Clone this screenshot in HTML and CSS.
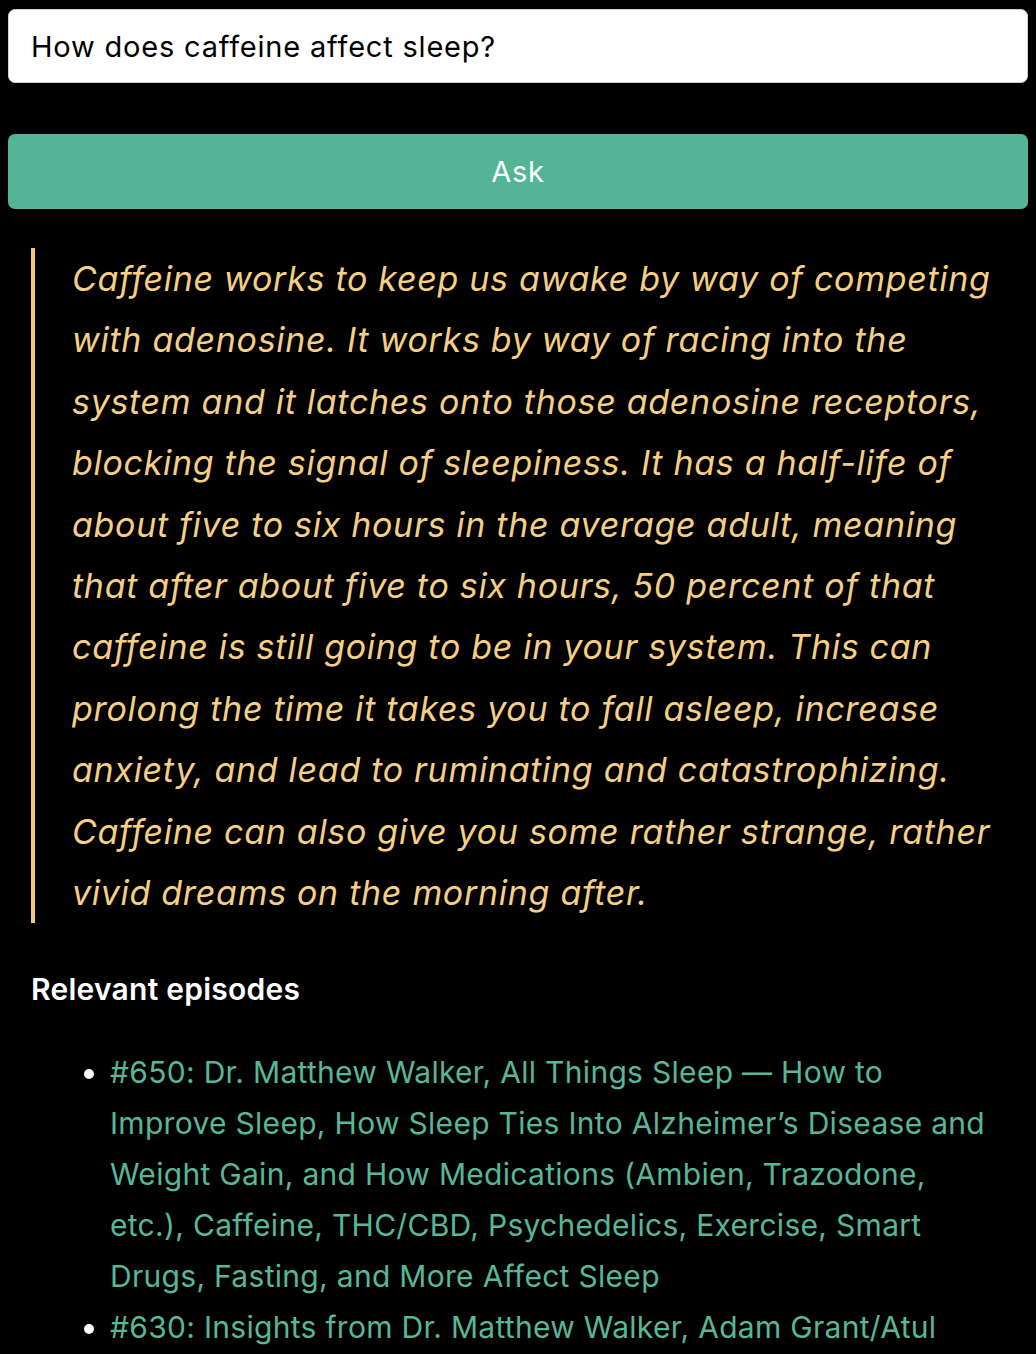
FILE: index.html
```html
<!DOCTYPE html>
<html lang="en">
<head>
<meta charset="utf-8">
<title>Ask</title>
<link rel="stylesheet" href="styles.css">
</head>
<body>
<main class="page">
  <input class="question" type="text" value="How does caffeine affect sleep?">
  <button class="ask">Ask</button>
  <blockquote class="answer">Caffeine works to keep us awake by way of competing with adenosine. It works by way of racing into the system and it latches onto those adenosine receptors, blocking the signal of sleepiness. It has a half-life of about five to six hours in the average adult, meaning that after about five to six hours, 50 percent of that caffeine is still going to be in your system. This can prolong the time it takes you to fall asleep, increase anxiety, and lead to ruminating and catastrophizing. Caffeine can also give you some rather strange, rather vivid dreams on the morning after.</blockquote>
  <h3 class="episodes-title">Relevant episodes</h3>
  <ul class="episodes">
    <li><a href="#">#650: Dr. Matthew Walker, All Things Sleep — How to Improve Sleep, How Sleep Ties Into Alzheimer’s Disease and Weight Gain, and How Medications (Ambien, Trazodone, etc.), Caffeine, THC/CBD, Psychedelics, Exercise, Smart Drugs, Fasting, and More Affect Sleep</a></li>
    <li><a href="#">#630: Insights from Dr. Matthew Walker, Adam Grant/Atul Gawande, and More</a></li>
  </ul>
</main>
</body>
</html>
```

FILE: styles.css
```css
html, body {
  background: #000;
}
body {
  margin: 8px;
  font-family: Inter, "Noto Sans", "Liberation Sans", sans-serif;
  color: #fff;
}
.page {
  display: flex;
  flex-direction: column;
}
.question {
  box-sizing: border-box;
  width: 100%;
  height: 74px;
  margin: 1px 0 0;
  padding: 0 22px;
  border: 1px solid #cfcfcf;
  border-radius: 7px;
  background: #fff;
  color: #000;
  font-family: inherit;
  font-size: 29px;
  letter-spacing: 0.8px;
  outline: none;
}
.ask {
  box-sizing: border-box;
  width: 100%;
  height: 75px;
  margin: 51px 0 0;
  border: none;
  border-radius: 7px;
  background: #53b596;
  color: #fff;
  font-family: inherit;
  font-size: 29px;
  letter-spacing: 0.8px;
  cursor: pointer;
}
.answer {
  margin: 39px 32px 0 23px;
  padding: 0 0 0 37px;
  border-left: 4px solid #f3c67c;
  color: #f6cf86;
  font-style: italic;
  font-size: 34px;
  letter-spacing: 0.7px;
  line-height: 61.4px;
}
.episodes-title {
  margin: 44px 0 0 23px;
  font-size: 30px;
  font-weight: 600;
  letter-spacing: 0.25px;
  line-height: 44px;
}
.episodes {
  margin: 36px 40px 0 0;
  padding: 0 0 0 102px;
  font-size: 30px;
  letter-spacing: 0.3px;
  line-height: 51px;
  color: #fff;
}
.episodes a {
  color: #57b797;
  text-decoration: none;
}
```
